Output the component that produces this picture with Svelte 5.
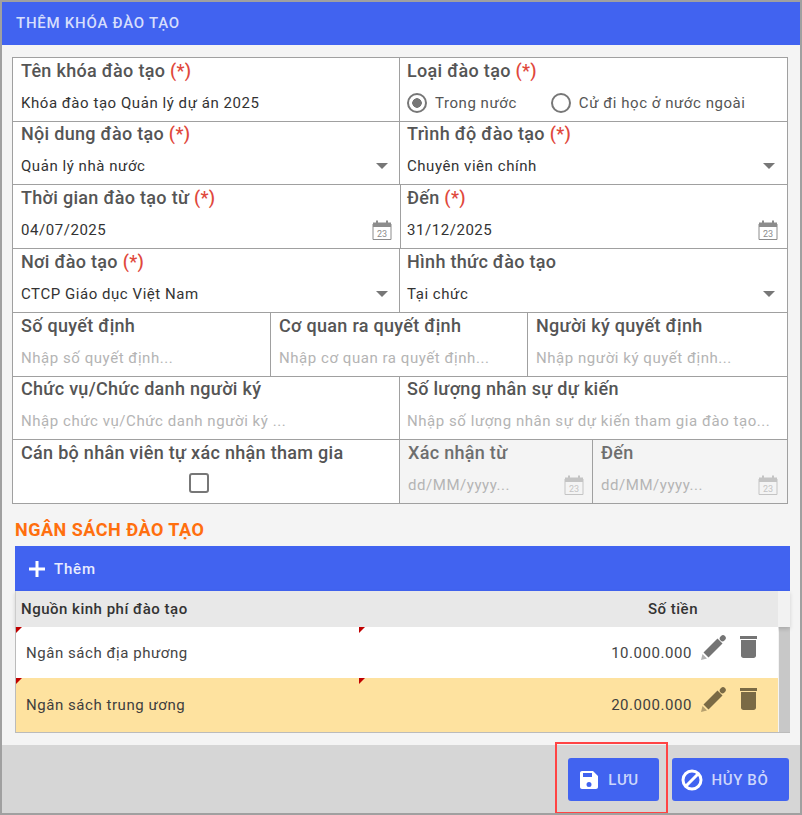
<script>
    let rows = [
        { h: 64, cells: [
            { label: "Tên khóa đào tạo", req: true, value: "Khóa đào tạo Quản lý dự án 2025", w: 387 },
            { label: "Loại đào tạo", req: true, type: "radio" }
        ]},
        { h: 63, up: true, cells: [
            { label: "Nội dung đào tạo", req: true, value: "Quản lý nhà nước", type: "select", w: 387 },
            { label: "Trình độ đào tạo", req: true, value: "Chuyên viên chính", type: "select" }
        ]},
        { h: 64, tight: true, cells: [
            { label: "Thời gian đào tạo từ", req: true, value: "04/07/2025", type: "date", w: 388 },
            { label: "Đến", req: true, value: "31/12/2025", type: "date" }
        ]},
        { h: 64, cells: [
            { label: "Nơi đào tạo", req: true, value: "CTCP Giáo dục Việt Nam", type: "select", w: 387 },
            { label: "Hình thức đào tạo", value: "Tại chức", type: "select" }
        ]},
        { h: 64, cells: [
            { label: "Số quyết định", hint: "Nhập số quyết định...", w: 258 },
            { label: "Cơ quan ra quyết định", hint: "Nhập cơ quan ra quyết định...", w: 257 },
            { label: "Người ký quyết định", hint: "Nhập người ký quyết định..." }
        ]},
        { h: 63, up: true, cells: [
            { label: "Chức vụ/Chức danh người ký", hint: "Nhập chức vụ/Chức danh người ký ...", w: 387 },
            { label: "Số lượng nhân sự dự kiến", hint: "Nhập số lượng nhân sự dự kiến tham gia đào tạo..." }
        ]},
        { h: 64, cells: [
            { label: "Cán bộ nhân viên tự xác nhận tham gia", type: "check", w: 387 },
            { label: "Xác nhận từ", hint: "dd/MM/yyyy...", type: "date", off: true, w: 193 },
            { label: "Đến", hint: "dd/MM/yyyy...", type: "date", off: true }
        ]}
    ];

    let budgets = [
        { name: "Ngân sách địa phương", money: "10.000.000", h: 51 },
        { name: "Ngân sách trung ương", money: "20.000.000", h: 54, active: true }
    ];
</script>

{#snippet calendar()}
    <svg class="cal" width="20" height="20" viewBox="0 0 20 20" fill="none">
        <path d="M1 2.500h18v4.500H1z" fill="currentColor"/>
        <path d="M4 .5h2V3H4zM14 .5h2V3h-2z" fill="currentColor"/>
        <path d="M1 4v15.500h18V4" stroke="currentColor" stroke-width="1"/>
        <text x="10" y="17" text-anchor="middle" font-size="9" letter-spacing="0" fill="currentColor" font-family="Roboto, sans-serif">23</text>
    </svg>
{/snippet}

<div class="dialog">
    <header class="title">THÊM KHÓA ĐÀO TẠO</header>

    <main class="content">
        <div class="form">
            {#each rows as row}
                <div class="row" class:up={row.up} class:tight={row.tight} style="height: {row.h}px">
                    {#each row.cells as cell}
                        <div class="cell" class:off={cell.off} class:grow={!cell.w} style={cell.w ? `width: ${cell.w}px` : ""}>
                            <div class="label">{cell.label}{#if cell.req}&nbsp;<span class="req">(*)</span>{/if}</div>

                            {#if cell.type === "radio"}
                                <div class="radios">
                                    <span class="radio on"></span><span class="radio-text">Trong nước</span>
                                    <span class="radio second"></span><span class="radio-text">Cử đi học ở nước ngoài</span>
                                </div>
                            {:else if cell.type === "check"}
                                <div class="check-line"><span class="check"></span></div>
                            {:else}
                                <div class="value" class:hint={cell.hint}>
                                    <span>{cell.value || cell.hint}</span>
                                    {#if cell.type === "select"}
                                        <span class="caret"></span>
                                    {:else if cell.type === "date"}
                                        {@render calendar()}
                                    {/if}
                                </div>
                            {/if}
                        </div>
                    {/each}
                </div>
            {/each}
        </div>

        <h2 class="section">NGÂN SÁCH ĐÀO TẠO</h2>

        <div class="grid">
            <div class="toolbar">
                <svg width="16" height="16" viewBox="0 0 16 16"><path d="M6.500 0h3v6.500H16v3H9.500V16h-3V9.500H0v-3h6.500z" fill="#fff"/></svg>
                <span>Thêm</span>
            </div>
            <div class="grid-head">
                <span class="col-name">Nguồn kinh phí đào tạo</span>
                <span class="col-money">Số tiền</span>
            </div>
            <div class="grid-body">
                <div class="grid-rows">
                    {#each budgets as item}
                        <div class="grid-row" class:active={item.active} style="height: {item.h}px">
                            <i class="mark"></i>
                            <i class="mark second"></i>
                            <span class="name">{item.name}</span>
                            <span class="money">{item.money}</span>
                            <svg class="pencil" width="25" height="25" viewBox="0 0 25 25">
                                <path d="M2.500 17.500l14-14 5 5-14 14z" fill="currentColor"/>
                                <path d="M1.500 19l4.500 4.500L0 25z" fill="currentColor" opacity=".55"/>
                                <path d="M21.500 3.500L22 3" stroke="currentColor" stroke-width="5.500" stroke-linecap="round"/>
                            </svg>
                            <svg class="trash" width="18" height="22" viewBox="0 0 18 22">
                                <path d="M0 0h17v3H0z" fill="currentColor"/>
                                <path d="M1 4h15v15.500c0 1.500-1 2.500-2.500 2.500h-10C2 22 1 21 1 19.500z" fill="currentColor"/>
                            </svg>
                        </div>
                    {/each}
                </div>
                <div class="scroll"></div>
            </div>
        </div>
    </main>

    <footer class="actions">
        <button class="btn save">
            <svg width="18" height="18" viewBox="0 0 18 18"><path fill-rule="evenodd" d="M2 0h11l5 5v11c0 1.100-.9 2-2 2H2c-1.100 0-2-.9-2-2V2C0 .9.900 0 2 0zm1 2v4h9V2zm6 9a2.500 2.500 0 100 5 2.500 2.500 0 000-5z" fill="#fff"/></svg>
            <span>LƯU</span>
        </button>
        <button class="btn cancel">
            <svg width="22" height="22" viewBox="0 0 22 22" fill="none" stroke="#fff" stroke-width="3"><circle cx="11" cy="11" r="9"/><path d="M5 17L17 5"/></svg>
            <span>HỦY BỎ</span>
        </button>
        <div class="highlight"></div>
    </footer>
</div>

<style>
    :global(body) {
        margin: 0;
        background: #a0a0a0;
    }

    .dialog {
        width: 798px;
        height: 811px;
        margin: 2px 2px 0;
        display: flex;
        flex-direction: column;
        background: #f4f4f4;
        font-family: Roboto, "Liberation Sans", sans-serif;
    }

    .title {
        height: 43px;
        flex: none;
        box-sizing: border-box;
        padding: 13px 14px 0;
        background: #4163f0;
        color: #d6defc;
        font-size: 15px;
        letter-spacing: .75px;
        font-weight: 500;
        line-height: 17px;
    }

    /* ================================
        FORM
    ================================= */
    .content {
        flex: 1;
        padding: 12px 0 0 10px;
    }

    .form {
        width: 776px;
        box-sizing: border-box;
        border: solid #a0a0a0;
        border-width: 1px 1px 0 1px;
        background: #fff;
    }

    .row {
        display: flex;
        box-sizing: border-box;
        border-bottom: 1px solid #a0a0a0;
    }
    .row.up .label {
        margin-top: -1px;
    }

    .cell {
        box-sizing: border-box;
        padding: 0 8px;
        border-right: 1px solid #a0a0a0;
        flex: none;
    }
    .cell.grow {
        flex: 1;
        padding: 0 9px 0 7px;
        border-right: 0;
    }
    .cell.grow:nth-child(3) {
        padding-left: 8px;
    }
    .tight .cell.grow {
        padding-left: 6px;
    }
    .cell.off {
        background: #f4f4f4;
    }
    .cell.off .label {
        color: #6e6e6e;
    }

    .label {
        height: 26px;
        line-height: 26px;
        font-size: 18px;
        letter-spacing: .3px;
        font-weight: 500;
        color: #555;
        white-space: nowrap;
    }
    .req {
        color: #e0483c;
    }

    .value {
        display: flex;
        align-items: center;
        justify-content: space-between;
        height: 37px;
        font-size: 15px;
        letter-spacing: .55px;
        color: #333;
        white-space: nowrap;
    }
    .value.hint {
        color: #b4b4b4;
    }

    .caret {
        width: 0;
        height: 0;
        margin-right: 3px;
        border: 6px solid transparent;
        border-top: 6px solid #777;
        border-bottom: 0;
    }

    .cal {
        color: #8c8c8c;
        flex: none;
    }
    .off .cal {
        color: #c4c4c4;
    }

    .radios {
        display: flex;
        align-items: center;
        height: 37px;
        font-size: 15px;
        letter-spacing: .55px;
        color: #555;
    }
    .radio {
        width: 20px;
        height: 20px;
        box-sizing: border-box;
        border: 2px solid #777;
        border-radius: 50%;
        margin-right: 8px;
        flex: none;
    }
    .radio.on {
        background: radial-gradient(circle, #777 0 4.5px, transparent 5px);
    }
    .radio.second {
        margin-left: 34px;
    }

    .check-line {
        display: flex;
        justify-content: center;
        padding: 7px 14px 0 0;
    }
    .check {
        width: 20px;
        height: 20px;
        box-sizing: border-box;
        border: 2px solid #777;
        border-radius: 3px;
    }

    /* ================================
        BUDGET TABLE
    ================================= */
    .section {
        margin: 14px 0 2px 3px;
        height: 26px;
        line-height: 24px;
        font-size: 18px;
        letter-spacing: .5px;
        font-weight: 700;
        color: #ff6f0e;
    }

    .grid {
        margin-left: 3px;
        width: 775px;
        border-bottom: 1px solid #bbb;
    }

    .toolbar {
        height: 45px;
        box-sizing: border-box;
        padding-left: 14px;
        display: flex;
        align-items: center;
        gap: 9px;
        background: #4163f0;
        color: #e8ecfe;
        font-size: 15px;
        letter-spacing: .8px;
        font-weight: 500;
    }

    .grid-head {
        position: relative;
        height: 36px;
        display: flex;
        align-items: center;
        justify-content: space-between;
        box-sizing: border-box;
        padding: 0 92px 0 5px;
        border-left: 1px solid #ccc;
        background: linear-gradient(to right, #e8e8e8 762px, #f2f2f2 762px);
        box-shadow: 0 2px 4px rgba(0,0,0,.15);
        font-size: 15px;
        letter-spacing: .5px;
        font-weight: 500;
        color: #333;
    }

    .grid-body {
        display: flex;
        border-left: 1px solid #bbb;
    }
    .grid-rows {
        flex: 1;
    }
    .scroll {
        width: 11px;
        margin-left: 1px;
        background: #c8c8c8;
    }

    .grid-row {
        position: relative;
        display: flex;
        align-items: center;
        box-sizing: border-box;
        padding: 0 0 0 10px;
        background: #fff;
        font-size: 15px;
        letter-spacing: .55px;
        color: #444;
    }
    .grid-row.active {
        background: #fee29f;
        color: #3e3e3e;
    }

    .mark {
        position: absolute;
        z-index: 2;
        left: 0;
        top: 0;
        border: solid transparent;
        border-width: 6px 6px 0 0;
        border-top-color: #c00000;
    }
    .mark.second {
        left: 343px;
    }

    .name {
        flex: 1;
    }
    .money {
        margin-right: 9px;
    }
    .pencil {
        color: #747474;
        margin: -11px 14px 0 0;
    }
    .trash {
        color: #747474;
        margin: -12px 20px 0 0;
    }
    .active .pencil, .active .trash {
        color: #7a6a45;
    }

    /* ================================
        FOOTER
    ================================= */
    .actions {
        position: relative;
        flex: none;
        height: 68px;
        display: flex;
        justify-content: flex-end;
        gap: 13px;
        box-sizing: border-box;
        padding: 13px 11px 0 0;
        background: #d6d6d6;
    }

    .btn {
        height: 43px;
        display: flex;
        align-items: center;
        justify-content: center;
        border: 0;
        border-radius: 3px;
        background: #4163f0;
        color: #ccd6fb;
        font-family: inherit;
        font-size: 15px;
        letter-spacing: .6px;
        font-weight: 500;
        padding: 0;
    }
    .save {
        width: 91px;
        gap: 10px;
        padding-right: 8px;
    }
    .cancel {
        width: 117px;
        gap: 9px;
        padding-right: 12px;
    }

    .highlight {
        position: absolute;
        left: 553px;
        top: -3px;
        width: 113px;
        height: 72px;
        box-sizing: border-box;
        border: 2px solid #f44;
    }
</style>
